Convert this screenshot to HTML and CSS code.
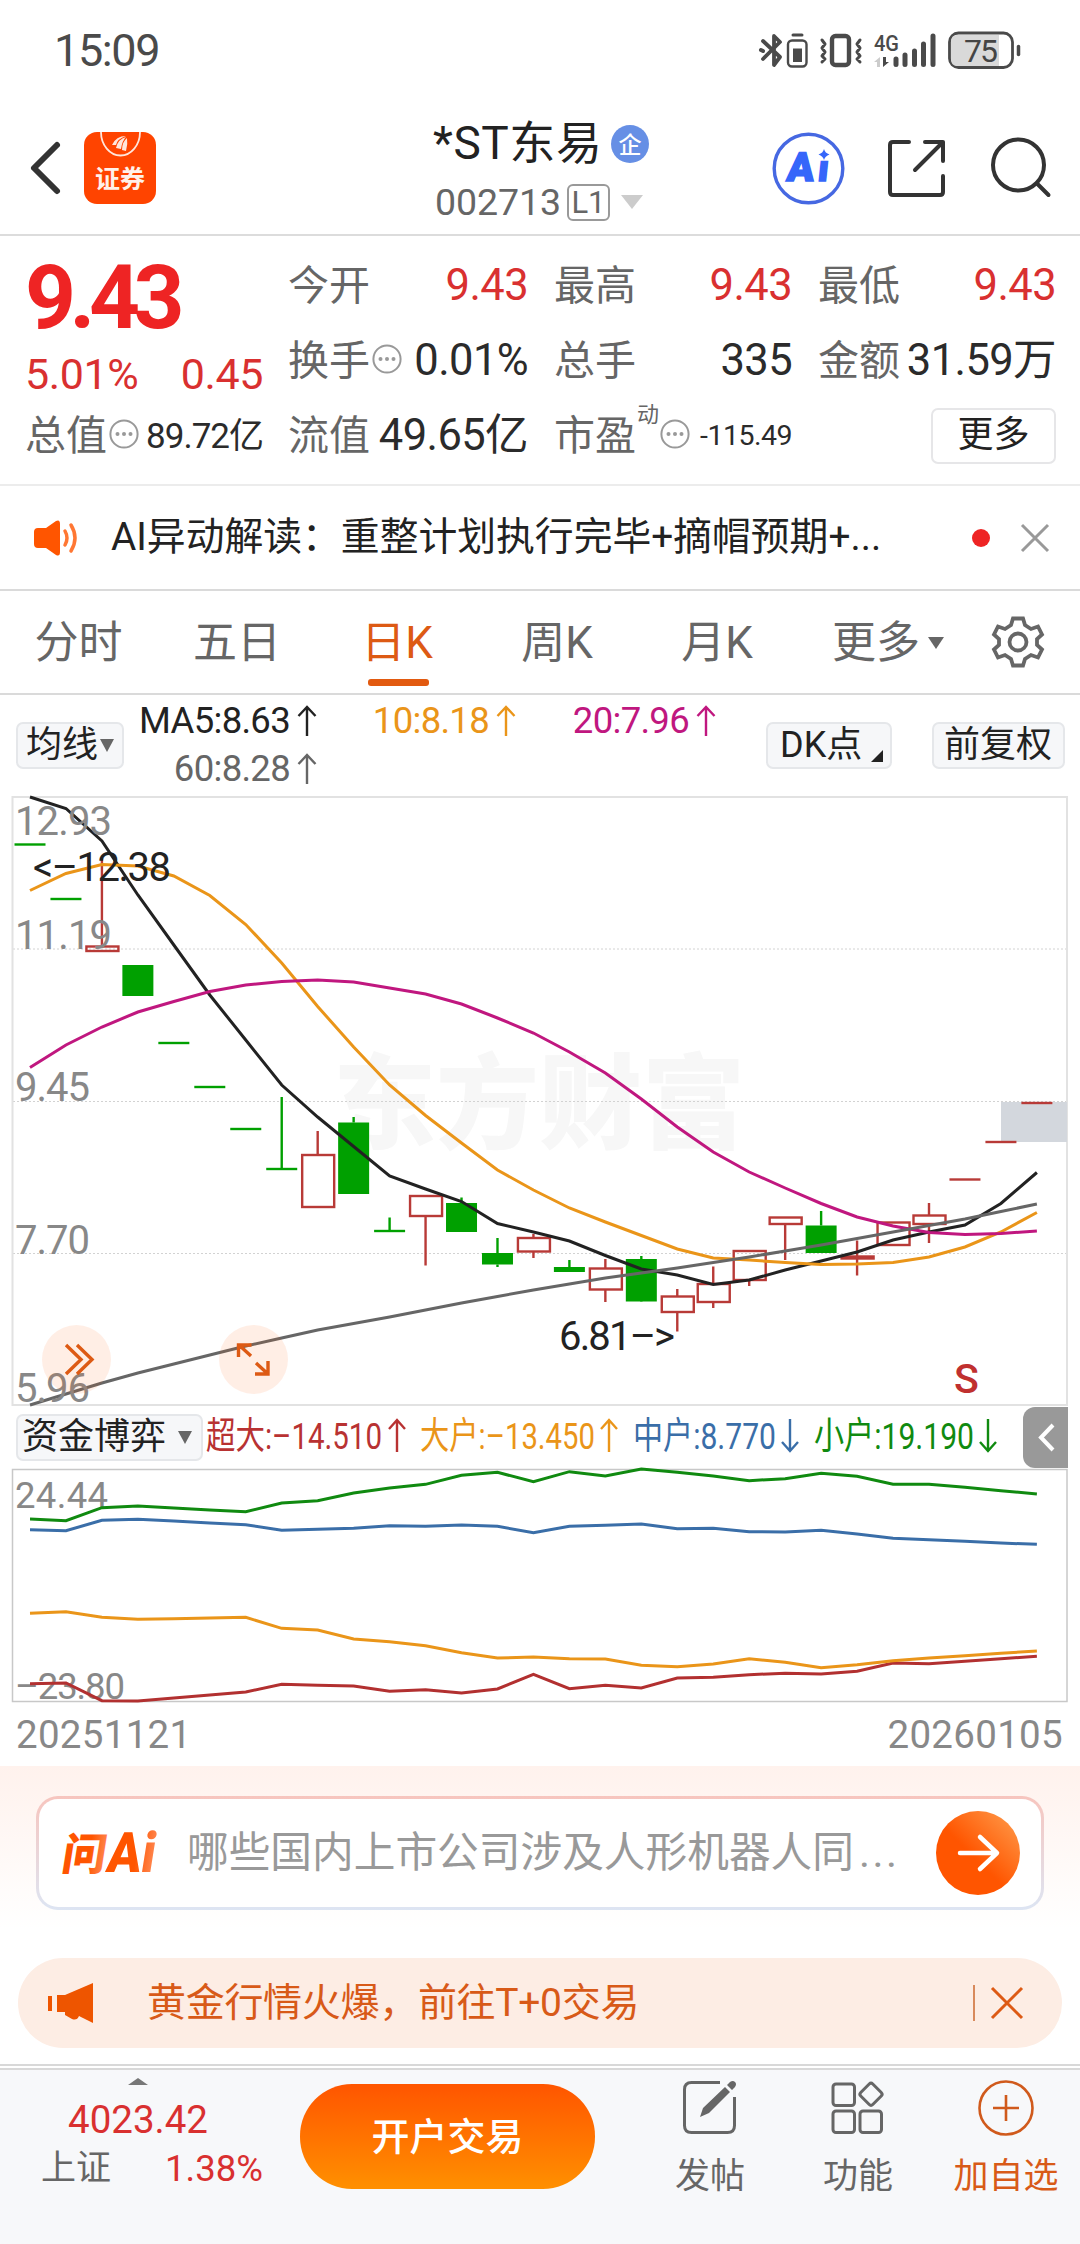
FILE: index.html
```
<!DOCTYPE html>
<html lang="zh-CN">
  <head>
    <meta charset="UTF-8" />
    <meta name="viewport" content="width=device-width, initial-scale=1.0" />
    <title>*ST东易 002713</title>
    <link rel="stylesheet" href="styles.css">
  </head>
  <body>
    <!-- shared symbols -->
    <svg class="symbols">
      <symbol id="up" viewBox="0 0 20 32"><path d="M10 31V2M1.500 11L10 2l8.500 9" /></symbol>
      <symbol id="dots" viewBox="0 0 30 30">
        <circle cx="15" cy="15" r="13.600" fill="none" stroke="#999" stroke-width="2" />
        <g fill="#999"><circle cx="8.500" cy="15" r="2" /><circle cx="15" cy="15" r="2" /><circle cx="21.500" cy="15" r="2" /></g>
      </symbol>
    </svg>

    <div class="status">
      <span class="clock">15:09</span>
      <svg class="status-icons" width="264" height="40" viewBox="760 31 264 40">
        <g fill="none" stroke="#4a4a4a" stroke-width="4" stroke-linecap="round" stroke-linejoin="round">
          <path d="M763 41l17 16-6 8V36l6 6-17 17" stroke-width="3.800" />
          <path d="M761 50l2 1" />
          <rect x="788" y="40.500" width="18.500" height="26" rx="4" stroke-width="2.400" />
          <path d="M793 35h9" stroke-width="3" />
          <rect x="832" y="36" width="17" height="29" rx="3.500" stroke-width="4.400" />
          <path d="M822 40l3 4-3 4 3 4-3 4 3 3-3 3M860 40l-3 4 3 4-3 4 3 4-3 3 3 3" stroke-width="3" />
          <path d="M896 59v5.500M905 55v9.500M914.500 51v13.500M923.500 44v20.500M933 36v28.500" stroke-width="5" />
          <rect x="949.500" y="33" width="63" height="34.500" rx="9" stroke-width="2.800" />
          <path d="M1018.500 46.500v8" stroke-width="3.500" />
        </g>
        <path d="M957 35h42v31h-42q-6 0-6-7V42q0-7 6-7" fill="#d9d9d9" />
        <rect x="793" y="48.500" width="9" height="13.500" fill="#4a4a4a" />
        <path d="M880 57v10h-3v-5h-3z" fill="#ccc" />
        <path d="M883 57v10l6-5h-3v-5z" fill="#4a4a4a" />
        <text x="874" y="50.500" font-size="22" font-weight="500" textLength="25" lengthAdjust="spacingAndGlyphs" fill="#4a4a4a">4G</text>
        <text x="964" y="62" font-size="32" textLength="34" fill="#444">75</text>
      </svg>
    </div>

    <header class="header">
      <svg class="back" width="32" height="54" viewBox="0 0 32 54"><path d="M28 4L5 27l23 23" /></svg>
      <svg class="app-logo" width="72" height="72" viewBox="0 0 72 72">
        <rect width="72" height="72" rx="13" fill="#ff4400" />
        <path d="M17 0a19.500 23.500 0 0 0 39 0" fill="none" stroke="#ffe6dc" stroke-width="1.800" />
        <path d="M28 13q4-9 14-9-9 3-10 9zM32 16q2-9 10-11-4 4-5 12zM38 18q0-8 5-12 1 6-1 13z" fill="#ffe6dc" />
        <text x="11" y="56" font-size="25" font-weight="700" fill="#fff1ea">证券</text>
      </svg>
      <div class="stock">
        <div class="stock-name">*ST东易
          <svg width="38" height="38" viewBox="0 0 38 38"><circle cx="19" cy="19" r="19" fill="#668fe5" /><text x="7.500" y="28" font-size="23" font-weight="500" letter-spacing="0" fill="#fff">企</text></svg>
        </div>
        <div class="stock-code"><span>002713</span><i class="level">L1</i><b class="tri tri-code"></b></div>
      </div>
      <svg class="tools" width="290" height="80" viewBox="770 128 290 80">
        <circle cx="808.500" cy="168.500" r="34.300" fill="none" stroke="#4668e2" stroke-width="3.400" />
        <path d="M824 149q1 4 5.500 5.500-4.500 1.500-5.500 5.500-1-4-5.500-5.500 4.500-1.500 5.500-5.500z" fill="#3566fa" />
        <g transform="translate(786 181) skewX(-6)" font-weight="900" fill="#3566fa" stroke="#3566fa" stroke-width="1.600"><text font-size="40" textLength="27" lengthAdjust="spacingAndGlyphs">A</text><text x="31" font-size="37">ı</text></g>
        <g fill="none" stroke="#333" stroke-width="4" stroke-linecap="round" stroke-linejoin="round">
          <path d="M909 142h-16q-3 0-3 3v47q0 3 3 3h47q3 0 3-3v-16M925 142h18v19M943 142l-28 28" />
          <circle cx="1018.500" cy="165" r="25.500" /><path d="M1037 183.500l11.500 11.500" />
        </g>
      </svg>
    </header>

    <section class="quote">
      <div class="price">
        <div class="last">9.43</div>
        <div class="change"><span>5.01%</span><span>0.45</span></div>
        <div class="cell cap"><label>总值</label><svg class="dots"><use href="#dots" /></svg><span class="mid">89.72亿</span></div>
      </div>
      <div class="quote-grid">
        <div class="cell"><label>今开</label><span class="red">9.43</span></div>
        <div class="cell"><label>最高</label><span class="red">9.43</span></div>
        <div class="cell"><label>最低</label><span class="red">9.43</span></div>
        <div class="cell"><label>换手</label><svg class="dots"><use href="#dots" /></svg><span>0.01%</span></div>
        <div class="cell"><label>总手</label><span>335</span></div>
        <div class="cell"><label>金额</label><span>31.59万</span></div>
        <div class="cell"><label>流值</label><span>49.65亿</span></div>
        <div class="cell"><label>市盈</label><sup>动</sup><svg class="dots"><use href="#dots" /></svg><span class="small">-115.49</span></div>
        <div class="cell"><button class="more">更多</button></div>
      </div>
    </section>

    <section class="notice">
      <svg class="horn" width="48" height="38" viewBox="0 0 48 38">
        <path d="M4 9h8L22 2q4-2 4 3v28q0 5-4 3l-10-7H4q-4 0-4-4V13q0-4 4-4z" fill="#ff5500" />
        <path d="M31 12q4 7 0 14M37 6q8 13 0 26" fill="none" stroke="#ff7733" stroke-width="3.500" stroke-linecap="round" />
      </svg>
      <span class="notice-text">AI异动解读：重整计划执行完毕+摘帽预期+...</span>
      <b class="dot"></b>
      <svg class="close" width="30" height="30" viewBox="0 0 30 30"><path d="M2 2l26 26M28 2L2 28" /></svg>
    </section>

    <nav class="tabs">
      <a>分时</a>
      <a>五日</a>
      <a class="active">日K</a>
      <a>周K</a>
      <a>月K</a>
      <a class="tab-more">更多<b class="tri tri-tab"></b></a>
      <svg class="gear" width="54" height="54" viewBox="-27 -27 54 54">
        <path d="M-5-23.500H5L7-17l6 4 7-2.500 4 8-5 4.500v6l5 4.500-4 8-7-2.500-6 4-2 6.500H-5L-7 17l-6-4-7 2.500-4-8 5-4.500v-6l-5-4.500 4-8 7 2.500 6-4z" /><circle r="8.500" />
      </svg>
    </nav>

    <section class="ma-row">
      <button class="chip ma-pick">均线<b class="tri tri-chip"></b></button>
      <div class="ma-list">
        <span>MA5:8.63<svg class="arrow"><use href="#up" /></svg></span>
        <span class="orange">10:8.18<svg class="arrow"><use href="#up" /></svg></span>
        <span class="pink">20:7.96<svg class="arrow"><use href="#up" /></svg></span>
        <span class="gray">60:8.28<svg class="arrow"><use href="#up" /></svg></span>
      </div>
      <button class="chip dk">DK点<b class="corner"></b></button>
      <button class="chip fq">前复权</button>
    </section>

    <!-- candle chart, drawn by script.js -->
    <svg class="kline" id="kline" width="1080" height="612" viewBox="0 796 1080 612">
      <text x="333" y="1141" font-size="103" font-weight="900" textLength="412" fill="#f7f7f7">东方财富</text>
      <path d="M13 949h1054M13 1101.500h1054M13 1253.500h1054" stroke="#d2d2d2" stroke-dasharray="2 2" />
      <rect x="12.500" y="797" width="1054.500" height="608" fill="none" stroke="#e2e2e2" stroke-width="2" />
      <rect x="1001" y="1102" width="66" height="40" fill="#d3d7dd" />
      <g id="candles"></g>
      <g id="averages" fill="none" stroke-width="3"></g>
      <g font-size="40" fill="#888">
        <text x="15" y="835" textLength="97">12.93</text>
        <text x="15" y="948.500" textLength="97">11.19</text>
        <text x="15" y="1101" textLength="75">9.45</text>
        <text x="15" y="1253.500" textLength="75">7.70</text>
        <text x="15" y="1401.500" textLength="75">5.96</text>
      </g>
      <g font-size="40" fill="#222">
        <text x="33" y="880.500" textLength="138">&lt;–12.38</text>
        <text x="559" y="1349.500" textLength="116">6.81–&gt;</text>
      </g>
      <text x="954" y="1393" font-size="41" font-weight="500" fill="#c0302f">S</text>
      <circle cx="76.500" cy="1359.500" r="34.500" fill="#ff5a00" fill-opacity=".1" />
      <circle cx="253.500" cy="1359.500" r="34.500" fill="#ff5a00" fill-opacity=".1" />
      <g fill="none" stroke="#dd5a14" stroke-width="3.400">
        <path d="M66 1345l15 14.500-15 14.500M77 1345l15 14.500-15 14.500" />
        <path d="M238.500 1357v-12h13M239 1345l12 11M268 1361v13h-13M256 1363l12 11" />
      </g>
    </svg>

    <section class="flow-row">
      <button class="chip flow-pick">资金博弈<b class="tri tri-chip"></b></button>
      <svg width="818" height="48" viewBox="205 1412 818 48" font-size="37">
        <text x="206" y="1449" textLength="176" lengthAdjust="spacingAndGlyphs" fill="#b83232">超大:–14.510</text>
        <text x="420" y="1449" textLength="175" lengthAdjust="spacingAndGlyphs" fill="#ea9519">大户:–13.450</text>
        <text x="633" y="1449" textLength="143" lengthAdjust="spacingAndGlyphs" fill="#3a6ea8">中户:8.770</text>
        <text x="814" y="1449" textLength="160" lengthAdjust="spacingAndGlyphs" fill="#108a10">小户:19.190</text>
        <g fill="none" stroke-width="2.400">
          <path d="M397 1452v-32M389 1429l8-9 8 9" stroke="#b83232" />
          <path d="M609 1452v-32M601 1429l8-9 8 9" stroke="#ea9519" />
          <path d="M790 1419v32M782 1442l8 9 8-9" stroke="#3a6ea8" />
          <path d="M988 1419v32M980 1442l8 9 8-9" stroke="#108a10" />
        </g>
      </svg>
      <svg class="fold" width="45" height="61" viewBox="0 0 45 61"><path d="M30 18L18 30.500 30 43" /></svg>
    </section>

    <svg class="flow" id="flow" width="1080" height="236" viewBox="0 1468 1080 236">
      <rect x="12.500" y="1469.500" width="1054.500" height="232" fill="none" stroke="#c8c8c8" stroke-width="1.500" />
      <g font-size="36.500" fill="#888">
        <text x="15" y="1508" textLength="93">24.44</text>
        <text x="15" y="1699" textLength="110">–23.80</text>
      </g>
      <g id="flows" fill="none" stroke-width="3"></g>
    </svg>
    <div class="dates"><span>20251121</span><span>20260105</span></div>

    <section class="ask">
      <div class="ask-box">
        <svg class="ask-logo" width="104" height="50" viewBox="0 0 104 50">
          <defs>
            <linearGradient id="askGrad"><stop offset=".6" stop-color="#ff5500" /><stop offset="1" stop-color="#ff8a55" /></linearGradient>
          </defs>
          <g transform="translate(5 44) skewX(-9)" fill="url(#askGrad)">
            <text x="-4" y="-2" font-size="44" font-weight="900">问</text>
            <text x="41" font-size="56" font-weight="900" textLength="48" lengthAdjust="spacingAndGlyphs">Ai</text>
          </g>
        </svg>
        <span class="ask-text">哪些国内上市公司涉及人形机器人同<em>...</em></span>
        <svg class="ask-go" width="84" height="84" viewBox="0 0 84 84">
          <defs><linearGradient id="goGrad" x1="0" y1="1" x2="1" y2="0"><stop offset=".45" stop-color="#ff5500" /><stop offset="1" stop-color="#ffa050" /></linearGradient></defs>
          <circle cx="42" cy="42" r="42" fill="url(#goGrad)" />
          <path d="M24 42h36M44 26l17 16-17 16" fill="none" stroke="#fff" stroke-width="4.500" stroke-linecap="round" stroke-linejoin="round" />
        </svg>
      </div>
    </section>

    <section class="banner">
      <svg width="46" height="40" viewBox="0 0 46 40" fill="#ee5500"><path d="M0 13h4v15H0zM9 12h8L45 0v40l-14-7q-2 5-7 3l-7-4v-3H9z" /></svg>
      <span class="banner-text">黄金行情火爆，前往T+0交易</span>
      <i class="divider"></i>
      <svg class="banner-close" width="34" height="34" viewBox="0 0 34 34"><path d="M2 2l30 30M32 2L2 32" /></svg>
    </section>

    <footer class="bottom">
      <div class="index">
        <b class="tri-up"></b>
        <div class="index-value">4023.42</div>
        <div class="index-row"><label>上证</label><span>1.38%</span></div>
      </div>
      <button class="open">开户交易</button>
      <div class="action post">
        <svg width="56" height="56" viewBox="0 0 56 56">
          <path d="M38 2.500H9.500q-7 0-7 7v36q0 7 7 7h36q7 0 7-7V17" fill="none" stroke="#666" stroke-width="3" />
          <path d="M18 37l3-9L43 7l5 5-21 21zM45 5l3-3q3-2 5 0t0 5l-3 3z" fill="#666" />
        </svg>
        <span>发帖</span>
      </div>
      <div class="action func">
        <svg width="56" height="56" viewBox="0 0 56 56" fill="none" stroke="#666" stroke-width="3">
          <rect x="3" y="4" width="21.500" height="21.500" rx="3" /><rect x="3" y="31" width="21.500" height="21.500" rx="3" /><rect x="30" y="31" width="21.500" height="21.500" rx="3" />
          <rect x="32" y="6" width="17" height="17" rx="2.500" transform="rotate(45 41 15)" />
        </svg>
        <span>功能</span>
      </div>
      <div class="action add">
        <svg width="56" height="56" viewBox="0 0 56 56" fill="none" stroke="#d05a1c" stroke-width="2.600"><circle cx="28" cy="28" r="26.500" /><path d="M15 28h26M28 15v26" /></svg>
        <span>加自选</span>
      </div>
    </footer>
    <script src="script.js"></script>
  </body>
</html>
```
FILE: styles.css
```
* {
  box-sizing: border-box;
  margin: 0;
  padding: 0;
}
body {
  width: 1080px;
  height: 2244px;
  overflow: hidden;
  background: #fff;
  color: #222;
  font-family: Roboto, "Noto Sans CJK SC", sans-serif;
  line-height: 1.2;
}
svg {
  display: block;
  flex: none;
  overflow: visible;
}
button {
  border: none;
  font-family: inherit;
  line-height: inherit;
  color: inherit;
}
i,
em {
  font-style: normal;
}
.symbols {
  width: 0;
  height: 0;
  position: absolute;
}
/* triangles */
.tri {
  display: block;
  border: solid transparent;
  border-bottom: none;
  border-top-color: #666;
}
.tri-code {
  border-width: 14px 11px 0;
  border-top-color: #ccc;
  margin-left: 11px;
}
.tri-tab {
  border-width: 12px 8px 0;
  margin-left: 8px;
}
.tri-chip {
  border-width: 13px 7px 0;
}
/* status bar */
.status {
  height: 92px;
  padding: 10px 56px 0 54px;
  display: flex;
  align-items: center;
  justify-content: space-between;
}
.clock {
  font-size: 45px;
  letter-spacing: -1.4px;
  color: #4a4a4a;
}
/* header */
.header {
  height: 144px;
  border-bottom: 2px solid #dcdcdc;
  display: flex;
}
.back {
  margin: 49px 0 0 29px;
  fill: none;
  stroke: #333;
  stroke-width: 6;
  stroke-linecap: round;
  stroke-linejoin: round;
}
.app-logo {
  margin: 40px 0 0 23px;
}
.stock {
  width: 614px;
  padding: 24px 0 0 277px;
}
.stock-name {
  display: flex;
  align-items: center;
  gap: 8px;
  height: 56px;
  font-size: 46px;
  letter-spacing: 0.6px;
  white-space: nowrap;
}
.stock-name svg {
  margin-top: -1px;
}
.stock-code {
  display: flex;
  align-items: center;
  height: 60px;
  padding-left: 2px;
  font-size: 37.500px;
  letter-spacing: -0.1px;
  color: #666;
}
.level {
  width: 43px;
  height: 37px;
  margin-left: 6px;
  border: 2px solid #999;
  border-radius: 6px;
  font-size: 31px;
  line-height: 33px;
  text-align: center;
}
.tools {
  margin-top: 36px;
}
/* quote */
.quote {
  height: 250px;
  padding: 14px 0 0 25px;
  border-bottom: 2px solid #ececec;
  display: flex;
}
.price {
  width: 238px;
  margin-right: 25px;
  color: #d93030;
}
.last {
  height: 96px;
  line-height: 96px;
  font-size: 89px;
  font-weight: 700;
  letter-spacing: -6.5px;
  color: #ee2424;
}
.change {
  display: flex;
  justify-content: space-between;
  height: 57px;
  line-height: 57px;
  font-size: 43px;
  letter-spacing: -0.4px;
}
.quote-grid {
  display: grid;
  grid-template-columns: 240px 238px 238px;
  grid-template-rows: 75px 75px 75px;
  column-gap: 26px;
}
.cell {
  display: flex;
  align-items: center;
  padding-bottom: 2px;
  color: #2b2b2b;
  font-size: 43.500px;
  letter-spacing: -0.6px;
  white-space: nowrap;
}
.cell label {
  color: #666;
  font-size: 41px;
  letter-spacing: 0;
}
.cell span {
  margin-left: auto;
}
.cell.cap {
  height: 69px;
}
.cell .mid {
  font-size: 35px;
  letter-spacing: -1px;
}
.cell .small {
  font-size: 28.500px;
  letter-spacing: -0.5px;
}
.cell sup {
  align-self: flex-start;
  margin: 2px 0 0 1px;
  font-size: 22px;
  color: #666;
}
.cell .red {
  color: #d93030;
}
.dots {
  width: 30px;
  height: 30px;
  margin: -5px 0 0 2px;
}
.more {
  width: 125px;
  height: 56px;
  margin: -1px 0 0 auto;
  border: 2px solid #e6e6e8;
  border-radius: 7px;
  background: #fff;
  font-size: 36px;
  color: #222;
}
/* notice */
.notice {
  height: 105px;
  border-bottom: 2px solid #dadada;
  display: flex;
  align-items: center;
  padding: 0 30px 0 34px;
}
.notice-text {
  width: 850px;
  margin-left: 29px;
  font-size: 38.800px;
  white-space: nowrap;
}
.dot {
  width: 18px;
  height: 18px;
  margin-left: 11px;
  border-radius: 50%;
  background: #ee2424;
}
.close {
  margin-left: auto;
  fill: none;
  stroke: #999;
  stroke-width: 3;
}
/* tabs */
.tabs {
  height: 104px;
  border-bottom: 2px solid #dadada;
  display: flex;
  align-items: center;
  font-size: 44px;
  color: #666;
}
.tabs a {
  display: flex;
  justify-content: center;
  align-items: center;
  width: 160px;
  height: 100px;
  padding-top: 2px;
}
.tabs a:first-child {
  width: 157px;
}
.tabs .active {
  position: relative;
  color: #dd5a14;
}
.active::after {
  content: "";
  position: absolute;
  left: 51px;
  bottom: 6px;
  width: 61px;
  height: 7px;
  border-radius: 3px;
  background: #e25a10;
}
.tabs .tab-more {
  width: 182px;
}
.gear {
  margin-left: 12px;
  fill: none;
  stroke: #666;
  stroke-width: 3.8;
}
/* moving averages */
.ma-row {
  height: 101px;
  display: flex;
  padding-left: 16px;
}
.chip {
  display: flex;
  align-items: center;
  height: 47px;
  border: 2px solid #e5e7ea;
  border-radius: 7px;
  background: #f6f7f9;
  font-size: 36px;
  color: #222;
}
.ma-row .chip {
  margin-top: 27px;
}
.ma-pick {
  width: 108px;
  padding-left: 8px;
  gap: 2px;
}
.ma-list {
  display: grid;
  grid-template-columns: 176px 199px 200px;
  grid-template-rows: 48px 48px;
  margin: 2px 0 0 17px;
  width: 625px;
  font-size: 36.500px;
}
.ma-list span {
  display: flex;
  align-items: center;
  justify-content: flex-end;
  letter-spacing: -0.7px;
}
.arrow {
  width: 20px;
  height: 32px;
  margin-left: 7px;
  fill: none;
  stroke: currentColor;
  stroke-width: 2.4;
}
.orange {
  color: #ea9519;
}
.pink {
  color: #c0177f;
}
.gray {
  color: #666;
}
.dk {
  width: 126px;
  padding-left: 12px;
}
.corner {
  align-self: flex-end;
  margin: 0 0 5px 9px;
  border-left: 12px solid transparent;
  border-bottom: 12px solid #222;
}
.fq {
  width: 133px;
  margin-left: 40px;
  padding-left: 10px;
}
/* capital flow */
.flow-row {
  height: 60px;
  display: flex;
}
.flow-pick {
  width: 187px;
  margin: 6px 2px 0 16px;
  padding-left: 4px;
  gap: 12px;
}
.flow-row > svg {
  margin-top: 4px;
}
.flow-row .fold {
  margin-top: -1px;
  background: #999;
  border-radius: 12px 0 0 12px;
  fill: none;
  stroke: #fff;
  stroke-width: 4;
}
.dates {
  height: 62px;
  padding: 8px 17px 0 16px;
  display: flex;
  justify-content: space-between;
  font-size: 38.500px;
  letter-spacing: 0.3px;
  color: #888;
}
/* ask */
.ask {
  height: 192px;
  padding: 30px 36px 0;
  background: linear-gradient(#fff2ed, #fff 85%);
}
.ask-box {
  height: 114px;
  display: flex;
  align-items: center;
  padding-left: 20px;
  border: 3px solid transparent;
  border-radius: 22px;
  background: linear-gradient(#fff, #fff) padding-box, linear-gradient(#f7c5be, #dde5f3) border-box;
}
.ask-text {
  width: 712px;
  margin-left: 24px;
  font-size: 41.700px;
  color: #999;
  white-space: nowrap;
}
.ask-text em {
  margin-left: 5px;
  letter-spacing: 2.5px;
}
.ask-go {
  margin-left: 37px;
}
/* banner */
.banner {
  height: 90px;
  margin: 0 18px;
  padding-left: 30px;
  display: flex;
  align-items: center;
  border-radius: 45px;
  background: #fdede4;
  color: #d85a18;
}
.banner-text {
  width: 820px;
  margin-left: 53px;
  font-size: 39px;
  letter-spacing: -0.3px;
}
.divider {
  width: 2px;
  height: 36px;
  margin-left: 6px;
  background: #d88a5c;
}
.banner-close {
  margin-left: 15px;
  fill: none;
  stroke: #dd5a14;
  stroke-width: 3;
}
/* bottom bar */
.bottom {
  height: 180px;
  margin-top: 16px;
  border-top: 2px solid #d8d8d8;
  background: #f7f8fa;
  box-shadow: inset 0 2px #fff, inset 0 4px #d8d8d8;
  display: flex;
}
.index {
  width: 300px;
  padding: 12px 37px 0 41px;
  color: #d93030;
}
.tri-up {
  display: block;
  width: 0;
  margin-left: 87px;
  border: 10px solid transparent;
  border-top: none;
  border-bottom: 7px solid #777;
}
.index-value {
  margin: 10px 0 0 27px;
  font-size: 38.500px;
  line-height: 50px;
}
.index-row {
  display: flex;
  justify-content: space-between;
  margin-top: -1px;
  font-size: 36.500px;
  line-height: 50px;
}
.index-row label {
  font-size: 35px;
  color: #666;
}
.open {
  width: 295px;
  height: 105px;
  margin-top: 18px;
  padding-top: 3px;
  border-radius: 52px;
  background: linear-gradient(#ff5500, #ff9000);
  font-size: 38px;
  font-weight: 500;
  color: #fff;
}
.action {
  width: 148px;
  padding-top: 14px;
  display: flex;
  flex-direction: column;
  align-items: center;
  font-size: 35px;
  line-height: 50px;
  color: #666;
}
.action span {
  margin-top: 16px;
}
.post {
  margin-left: 41px;
}
.action.add {
  color: #d85a18;
}
```
FILE: script.js
```
const NS = "http://www.w3.org/2000/svg";
const RED = "#b83a37";
const GREEN = "#00a000";
// x of the n-th trading day
const dayX = (n) => 30 + n * 35.96;

function add(parent, tag, attrs) {
  const el = document.createElementNS(NS, tag);
  Object.keys(attrs).forEach((k) => el.setAttribute(k, attrs[k]));
  parent.appendChild(el);
}

// [up?, high, body top, body bottom, low]
const candles = [
  [0, 844.5, 844.5, 844.5, 844.5],
  [0, 899, 899, 899, 899],
  [1, 858, 946.5, 951, 951],
  [0, 965, 965, 996, 996],
  [0, 1043, 1043, 1043, 1043],
  [0, 1087, 1087, 1087, 1087],
  [0, 1129, 1129, 1129, 1129],
  [0, 1097, 1169, 1169, 1169],
  [1, 1131, 1155, 1207, 1207],
  [0, 1117, 1122.5, 1194, 1194],
  [0, 1217.5, 1231, 1231, 1231],
  [1, 1196, 1196, 1216, 1265.5],
  [0, 1197.5, 1203, 1232, 1232],
  [0, 1238, 1253, 1264.5, 1267],
  [1, 1234, 1238, 1251.5, 1258],
  [0, 1260, 1267, 1272, 1272],
  [1, 1259, 1268.5, 1289.5, 1302],
  [0, 1256, 1259, 1301.5, 1302],
  [1, 1289, 1296.5, 1312, 1331.5],
  [1, 1266.5, 1284, 1302, 1308],
  [1, 1251, 1251, 1280, 1286],
  [1, 1217.5, 1217.5, 1224, 1260],
  [0, 1211, 1225.5, 1253, 1253],
  [1, 1240.5, 1256.5, 1258.5, 1275.5],
  [1, 1222.5, 1222.5, 1245, 1246],
  [1, 1203, 1215.5, 1224, 1243],
  [1, 1179.5, 1179.5, 1179.5, 1179.5],
  [1, 1142, 1142, 1142, 1142],
  [1, 1103, 1103, 1103, 1103],
];

const candleLayer = document.querySelector("#candles");
candles.forEach(([up, high, top, bottom, low], n) => {
  const x = dayX(n);
  const color = up ? RED : GREEN;
  if (high < top) add(candleLayer, "path", { d: `M${x} ${high}V${top}`, stroke: color, "stroke-width": 2.4 });
  if (low > bottom) add(candleLayer, "path", { d: `M${x} ${bottom}V${low}`, stroke: color, "stroke-width": 2.4 });
  if (top === bottom) {
    add(candleLayer, "path", { d: `M${x - 15.5} ${top}h31`, stroke: color, "stroke-width": 2.4 });
  } else if (up) {
    add(candleLayer, "rect", { x: x - 15.5, y: top, width: 32, height: bottom - top, fill: "none", stroke: color, "stroke-width": 2.4 });
  } else {
    add(candleLayer, "rect", { x: x - 15.5, y: top, width: 31, height: bottom - top, fill: color });
  }
});

function line(layer, color, ys) {
  const points = ys.map((y, n) => `${dayX(n)},${y}`).join(" ");
  add(document.querySelector(layer), "polyline", { points, stroke: color });
}

// moving averages: 5, 10, 20, 60 days
line("#averages", "#222", [797, 808.5, 841, 895, 945, 995, 1040, 1085, 1117, 1146.5, 1176, 1189, 1201.5, 1223.5, 1232, 1241, 1255.5, 1269, 1275, 1284.5, 1280, 1270, 1261, 1252, 1240, 1232, 1225, 1203.5, 1172.5]);
line("#averages", "#ea9519", [890.5, 873.5, 864.5, 866, 876, 895.5, 924.5, 963, 1006.5, 1047, 1085, 1115.5, 1143, 1170, 1190, 1208, 1222, 1235.5, 1249, 1258, 1260, 1262.5, 1264.5, 1264, 1262.5, 1257, 1247, 1232, 1212.5]);
line("#averages", "#c0177f", [1067.5, 1045, 1027, 1012, 1001.5, 991.5, 985, 981.5, 980, 982, 988, 994, 1004, 1018, 1033, 1052, 1073, 1099, 1127, 1152, 1172, 1188, 1203.5, 1217, 1226, 1232.5, 1234.5, 1233.5, 1231]);
line("#averages", "#666", [1405, 1394, 1383, 1373, 1364, 1355, 1346, 1338, 1330, 1323.5, 1317, 1310, 1303, 1296.5, 1290, 1284, 1278, 1273, 1268, 1262.5, 1257, 1251, 1245, 1238.5, 1232, 1225.5, 1219, 1211.5, 1204]);

// capital flow, offsets are thirds of a pixel below y = 1400
const flowY = (v) => 1400 + v / 3;
line("#flows", "#108a10", [357, 362, 323, 318, 324, 330, 335, 309, 302, 279, 264, 253, 226, 217, 245, 215, 228, 207, 217, 228, 242, 236, 220, 229, 253, 253, 262, 272, 282].map(flowY));
line("#flows", "#3a6ea8", [389, 392, 361, 358, 363, 369, 374, 391, 388, 385, 377, 379, 375, 379, 398, 379, 376, 372, 386, 385, 395, 396, 391, 402, 415, 419, 424, 429, 433].map(flowY));
line("#flows", "#b23030", [851, 849, 902, 903, 894, 885, 876, 853, 856, 858, 874, 869, 879, 867, 823, 866, 856, 864, 834, 832, 824, 820, 822, 814, 789, 791, 784, 776, 769].map(flowY));
line("#flows", "#ea9519", [640, 635, 652, 658, 656, 654, 652, 685, 690, 717, 725, 737, 758, 774, 771, 776, 777, 796, 800, 792, 776, 787, 803, 794, 782, 774, 767, 760, 753].map(flowY));
```
